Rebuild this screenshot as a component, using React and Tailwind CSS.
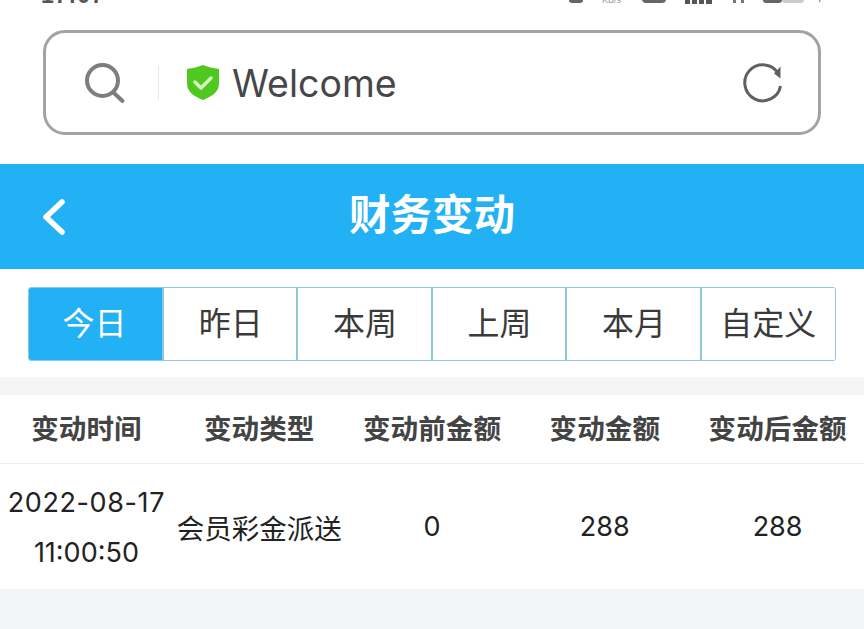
const tabs = ["今日", "昨日", "本周", "上周", "本月", "自定义"];
const heads = ["变动时间", "变动类型", "变动前金额", "变动金额", "变动后金额"];

function Status() {
  return (
    <div className="h-[30px] relative overflow-hidden">
      <div className="absolute left-[41px] top-[-15px] text-[23px] leading-[20px] font-bold tracking-[1px] text-[#555]">17:07</div>
      <svg className="absolute left-[560px] top-0" width="270" height="8" viewBox="0 0 270 8">
        <rect x="9" y="-6" width="14" height="9" rx="3" fill="#666" />
        <text x="42" y="3" fontSize="9" fill="#999" fontFamily="Liberation Sans">KB/s</text>
        <rect x="82" y="-6" width="24" height="9" rx="4" fill="#666" />
        <rect x="125" y="-4" width="5" height="8" fill="#555" />
        <rect x="132" y="-4" width="5" height="8" fill="#555" />
        <rect x="139" y="-4" width="5" height="8" fill="#555" />
        <rect x="146" y="-4" width="6" height="8" fill="#555" />
        <rect x="173" y="-3" width="3" height="6" fill="#777" />
        <rect x="181" y="-3" width="3" height="6" fill="#777" />
        <rect x="203" y="-6" width="19" height="9" rx="3" fill="#666" />
        <rect x="222" y="-6" width="22" height="9" rx="3" fill="#ccc" />
        <rect x="259" y="-4" width="1.5" height="6" fill="#999" />
      </svg>
    </div>
  );
}

function Shield() {
  return (
    <svg width="34" height="37" viewBox="0 0 34 37">
      <path d="M1 5 C7 4 12 3 17 1 C22 3 27 4 33 5 V20 C33 28 25 33 17 36 C9 33 1 28 1 20 Z" fill="#4fc91f" />
      <path d="M9 18 L15 24 L25 14" fill="none" stroke="#d8f5c8" strokeWidth="3.5" strokeLinecap="round" strokeLinejoin="round" />
    </svg>
  );
}

export default function App() {
  return (
    <div className="w-[864px] h-[629px] overflow-hidden bg-[#f4f5f7] text-[#333]" style={{ fontFamily: '"Liberation Sans","Noto Sans CJK SC",sans-serif' }}>
      <div className="bg-white">
        <Status />
        <div className="h-[134px] px-[43px] pb-[30px]">
          <div className="h-[105px] w-[778px] border-[3px] border-[#a3a3a3] rounded-[22px] flex items-center pl-[38px] pr-[35px]">
            <svg width="42" height="42" viewBox="0 0 42 42" fill="none" stroke="#7d7d7d" strokeWidth="4" strokeLinecap="round">
              <circle cx="18.5" cy="18.5" r="15.5" />
              <path d="M30 31 L38.5 39" />
            </svg>
            <div className="w-px h-[34px] bg-[#e6e6e6] ml-[32px] mr-[27px]" />
            <Shield />
            <span className="ml-[12px] text-[37.5px] leading-[40px] text-[#47474a] relative top-[1px]" style={{ fontFamily: 'Inter,sans-serif' }}>Welcome</span>
            <svg className="ml-auto" width="40" height="40" viewBox="0 0 40 40" fill="none" stroke="#606060" strokeWidth="3">
              <path d="M37.5 23 A18 18 0 1 1 35.5 11" />
              <path d="M37.5 3.5 V15.5 L31 10.5 Z" fill="#606060" stroke="none" />
            </svg>
          </div>
        </div>
      </div>

      <div className="h-[105px] bg-[#21b1f4] relative flex items-center justify-center">
        <svg className="absolute left-[41px] top-[35px]" width="24" height="36" viewBox="0 0 24 36" fill="none" stroke="white" strokeWidth="5.5" strokeLinecap="round" strokeLinejoin="round">
          <path d="M21 3 L5 18 L21 33" />
        </svg>
        <span className="text-white text-[41.5px] font-bold leading-[48px] relative top-[-1px]">财务变动</span>
      </div>

      <div className="h-[108px] bg-white pt-[18px] pl-[28px]">
        <div className="w-[808px] h-[74px] flex border border-[#8cc8d8] rounded-[3px] overflow-hidden">
          {tabs.map((t, i) => (
            <div key={t} className={i === 0
              ? "w-[134px] flex items-center justify-center pr-[3px] bg-[#21b1f4] text-white text-[32px]"
              : "flex-1 flex items-center justify-center border-l-2 border-[#8cc8d8] bg-white text-[#3a3a3a] text-[32px] ml-[-1px]"}>{t}</div>
          ))}
        </div>
      </div>

      <div className="h-[18px]" />

      <div className="bg-white h-[194px]">
        <div className="h-[69px] grid grid-cols-5 border-b border-[#eeeeee]">
          {heads.map((h) => (
            <div key={h} className="flex items-center justify-center pt-[2px] text-[27.6px] font-bold text-[#444]">{h}</div>
          ))}
        </div>
        <div className="h-[125px] pt-[2px] grid grid-cols-5 text-[#222] text-[27px]" style={{ fontFamily: 'Inter,"Noto Sans CJK SC",sans-serif' }}>
          <div className="flex flex-col items-center justify-center text-center leading-[50px] whitespace-nowrap">
            <span className="tracking-[0.6px]">2022-08-17</span>
            <span>11:00:50</span>
          </div>
          <div className="flex items-center justify-center text-[27.5px]" style={{ fontFamily: '"Noto Sans CJK SC",sans-serif' }}>会员彩金派送</div>
          <div className="flex items-center justify-center">0</div>
          <div className="flex items-center justify-center">288</div>
          <div className="flex items-center justify-center">288</div>
        </div>
      </div>
    </div>
  );
}
